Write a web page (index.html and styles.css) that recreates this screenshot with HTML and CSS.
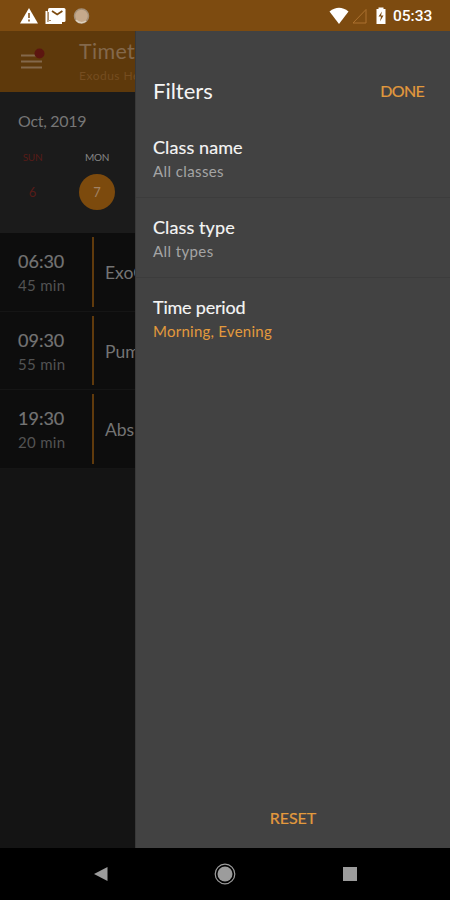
FILE: index.html
```html
<!DOCTYPE html>
<html lang="en">
<head>
<meta charset="utf-8">
<title>Timetable filters</title>
<link rel="stylesheet" href="styles.css">
</head>
<body>
<div class="phone">
  <header class="status">
    <svg class="status-left" width="100" height="31" viewBox="0 0 100 31">
      <path d="M29 8 38 23.5H20z" fill="#fff"/>
      <path d="M29 13v5M29 19.5v2" stroke="#7d4b10" stroke-width="1.5"/>
      <path d="M46.500 11v12H62" fill="none" stroke="#fff" stroke-width="2"/>
      <rect x="48" y="8" width="17.500" height="14" rx="1.500" fill="#fff"/>
      <path d="m52 11 5.200 3.500 5.200-3.500" fill="none" stroke="#7d4b10" stroke-width="1.800"/>
      <path d="M48.500 12v8.500H51" fill="none" stroke="#a98a66" stroke-width="1"/>
      <circle cx="81.500" cy="16" r="7" fill="#c6a98b" stroke="#a59078" stroke-width="1.500"/>
      <path d="M76 20a7 7 0 0 0 10 1" fill="none" stroke="#ddd0bd" stroke-width="1.500"/>
    </svg>
    <svg class="status-right" width="60" height="31" viewBox="328 0 60 31">
      <path d="M329.500 11.500Q339 4 348.500 11.500L339 24z" fill="#fff"/>
      <path d="M366 9.500v13.500h-13z" fill="none" stroke="#ac712e"/>
      <path d="M376.500 9h2V7.500h5V9h2v15h-9z" fill="#fff"/>
      <path d="m382 11.500-3.500 5h2.500l-1 5 3.500-6H381z" fill="#7d4b10"/>
    </svg>
    <span class="clock">05:33</span>
  </header>

  <main class="content">
    <section class="timetable">
      <div class="appbar">
        <svg class="menu" width="26" height="24" viewBox="0 0 26 24">
          <path d="M0 7.500h21M0 13.500h21M0 19.500h21" stroke="#83684b" stroke-width="2"/>
          <circle cx="18.500" cy="5.500" r="5" fill="#5c1610"/>
        </svg>
        <div class="heading">
          <div class="title">Timetable</div>
          <div class="club">Exodus Health</div>
        </div>
      </div>
      <div class="calendar">
        <div class="month">Oct, 2019</div>
        <div class="days">
          <div class="day sunday"><span class="name">SUN</span><span class="date">6</span></div>
          <div class="day selected"><span class="name">MON</span><span class="date">7</span></div>
        </div>
      </div>
      <div class="classes">
        <div class="row"><div class="when"><b>06:30</b><span>45 min</span></div><div class="what">ExoGym</div></div>
        <div class="row"><div class="when"><b>09:30</b><span>55 min</span></div><div class="what">Pump</div></div>
        <div class="row"><div class="when"><b>19:30</b><span>20 min</span></div><div class="what">Abs</div></div>
      </div>
    </section>

    <aside class="drawer">
      <div class="drawer-head"><h1>Filters</h1><span class="action done">DONE</span></div>
      <div class="filter"><span class="label name-label">Class name</span><span class="value">All classes</span></div>
      <div class="filter"><span class="label name-label">Class type</span><span class="value">All types</span></div>
      <div class="filter"><span class="label time-label">Time period</span><span class="value active">Morning, Evening</span></div>
      <div class="reset"><span class="action">RESET</span></div>
    </aside>
  </main>

  <nav class="nav">
    <svg width="450" height="52" viewBox="0 0 450 52">
      <path d="M94 26 107.500 19v14z" fill="#9c9c9c"/>
      <circle cx="225" cy="26" r="7.500" fill="#9c9c9c"/>
      <circle cx="225" cy="26" r="9.800" fill="none" stroke="#9c9c9c" stroke-width="1.200"/>
      <rect x="343" y="19" width="14" height="14" fill="#9c9c9c"/>
    </svg>
  </nav>
</div>
</body>
</html>
```
FILE: styles.css
```css
* { box-sizing: border-box; }
body { margin: 0; background: #000; font-family: Lato, "Noto Sans", sans-serif; }
.phone { width: 450px; height: 900px; display: flex; flex-direction: column; overflow: hidden; }
.status { height: 31px; flex: none; display: flex; align-items: center; background: #7d4b10; }
.status svg { display: block; }
.status-right { margin-left: 228px; }
.clock { margin-left: 5px; font: 500 15.500px/31px Roboto, sans-serif; padding-top: 2px; color: #fff; }
.content { height: 817px; flex: none; display: flex; }
.timetable { width: 135px; flex: none; overflow: hidden; background: #141414; white-space: nowrap; }
.appbar { height: 61px; display: flex; background: #5e390b; }
.menu { margin: 17px 0 0 21px; flex: none; }
.heading { margin-left: 32px; padding-top: 7px; }
.title { font-size: 21.500px; line-height: 27px; letter-spacing: .3px; color: #83684b; }
.club { margin-top: 3px; font-size: 12px; line-height: 16px; letter-spacing: .5px; color: #754d20; }
.calendar { height: 141px; padding-top: 18px; background: #1b1b1b; }
.month { padding-left: 18px; font-size: 16px; line-height: 22px; letter-spacing: -.3px; color: #767676; }
.days { display: flex; padding-top: 17px; }
.day { width: 64px; display: flex; flex-direction: column; align-items: center; }
.day .name { font-size: 10px; line-height: 16px; letter-spacing: -.3px; color: #858585; }
.day .date { width: 36px; height: 36px; margin-top: 9px; border-radius: 50%; font-size: 13px; line-height: 36px; text-align: center; }
.sunday { width: 65px; }
.sunday .name, .sunday .date { color: #571b18; }
.selected .date { background: #7c4a0d; color: #a18365; }
.row { height: 78.500px; display: flex; background: #0d0d0d; border-bottom: 1px solid #151515; }
.when { width: 92px; flex: none; padding: 17px 0 0 18px; display: flex; flex-direction: column; }
.when b { font-size: 18px; line-height: 22px; font-weight: 400; color: #747474; -webkit-text-stroke: .2px #747474; }
.when span { margin-top: 3px; font-size: 15px; line-height: 20px; letter-spacing: .3px; color: #535353; }
.what { margin: 4px 0; padding-left: 11px; border-left: 2px solid #603a0c; font-size: 17.500px; line-height: 71px; color: #747474; }
.drawer { flex: 1; display: flex; flex-direction: column; background: #424242; border-left: 1px solid #383838; }
.drawer-head { height: 87px; flex: none; padding: 45px 26px 0 17px; display: flex; justify-content: space-between; }
h1 { margin: 0; font-size: 22px; line-height: 30px; font-weight: 400; color: #f5f5f5; }
.action { font-size: 16px; line-height: 30px; color: #e39a3d; -webkit-text-stroke: .2px #e39a3d; }
.done { letter-spacing: -.7px; line-height: 29px; }
.filter { height: 80px; flex: none; padding: 18px 17px 0; display: flex; flex-direction: column; border-bottom: 1px solid #3c3c3c; }
.filter:nth-child(4) { border: 0; }
.label { font-size: 18px; line-height: 22px; color: #f5f5f5; -webkit-text-stroke: .15px #f5f5f5; }
.name-label { letter-spacing: .1px; }
.time-label { letter-spacing: -.2px; }
.value { margin-top: 3px; font-size: 15px; line-height: 20px; letter-spacing: .4px; color: #a5a5a5; }
.value.active { letter-spacing: .25px; color: #e39a3d; }
.reset { margin-top: auto; padding-bottom: 15px; text-align: center; }
.nav { height: 52px; flex: none; background: #000; }
.nav svg { display: block; }
```
